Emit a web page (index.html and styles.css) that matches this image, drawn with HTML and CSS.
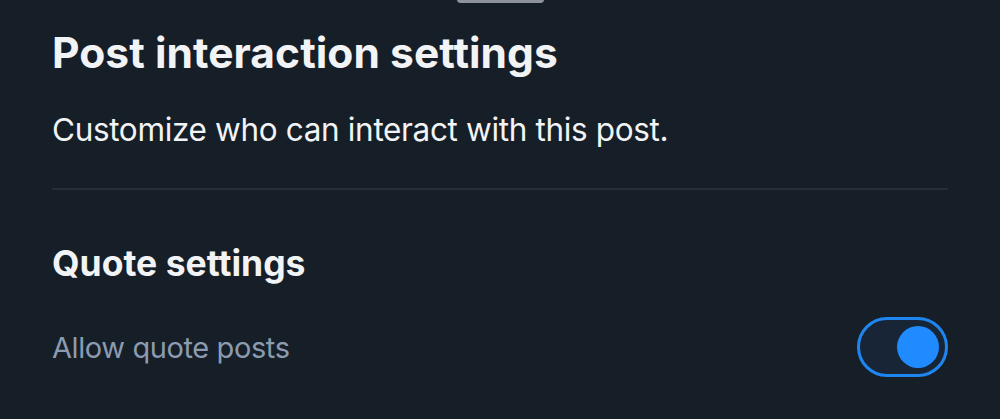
FILE: index.html
```html
<!DOCTYPE html>
<html lang="en">
<head>
<meta charset="utf-8">
<title>Post interaction settings</title>
<link rel="stylesheet" href="styles.css">
</head>
<body>
<div class="sheet">
  <div class="handle"></div>
  <div class="content">
    <h1 class="title">Post interaction settings</h1>
    <p class="subtitle">Customize who can interact with this post.</p>
    <div class="divider"></div>
    <h2 class="section-title">Quote settings</h2>
    <div class="row">
      <span class="row-label">Allow quote posts</span>
      <div class="toggle on"><div class="knob"></div></div>
    </div>
  </div>
</div>
</body>
</html>
```
FILE: styles.css
```css
html, body {
  margin: 0;
  padding: 0;
  background: #161e28;
}
body {
  font-family: Inter, "Noto Sans", sans-serif;
  color: #f1f3f5;
}
.sheet {
  position: relative;
  width: 1000px;
  height: 419px;
  overflow: hidden;
}
.handle {
  position: absolute;
  left: 457px;
  top: -4px;
  width: 87px;
  height: 7px;
  border-radius: 4px;
  background: #8d9199;
}
.content {
  padding: 28px 52px 0 52px;
  display: flex;
  flex-direction: column;
}
.title {
  margin: 0;
  font-size: 42.5px;
  font-weight: 700;
  line-height: 50px;
  letter-spacing: 0.05px;
}
.subtitle {
  margin: 32px 0 0 0;
  font-size: 31.5px;
  font-weight: 400;
  line-height: 40px;
  letter-spacing: -0.35px;
}
.divider {
  margin-top: 38px;
  height: 2px;
  background: #252d37;
}
.section-title {
  margin: 52px 0 0 0;
  font-size: 35.5px;
  font-weight: 700;
  line-height: 44px;
}
.row {
  margin-top: 31px;
  display: flex;
  align-items: center;
  justify-content: space-between;
}
.row-label {
  font-size: 29px;
  letter-spacing: -0.4px;
  color: #8b9bb0;
}
.toggle {
  box-sizing: border-box;
  width: 91px;
  height: 60px;
  border-radius: 30px;
  border: 3px solid #1f86f0;
  background: #172536;
  display: flex;
  align-items: center;
  justify-content: flex-end;
  padding-right: 6px;
}
.knob {
  width: 42px;
  height: 42px;
  border-radius: 50%;
  background: #208bfe;
}
```
